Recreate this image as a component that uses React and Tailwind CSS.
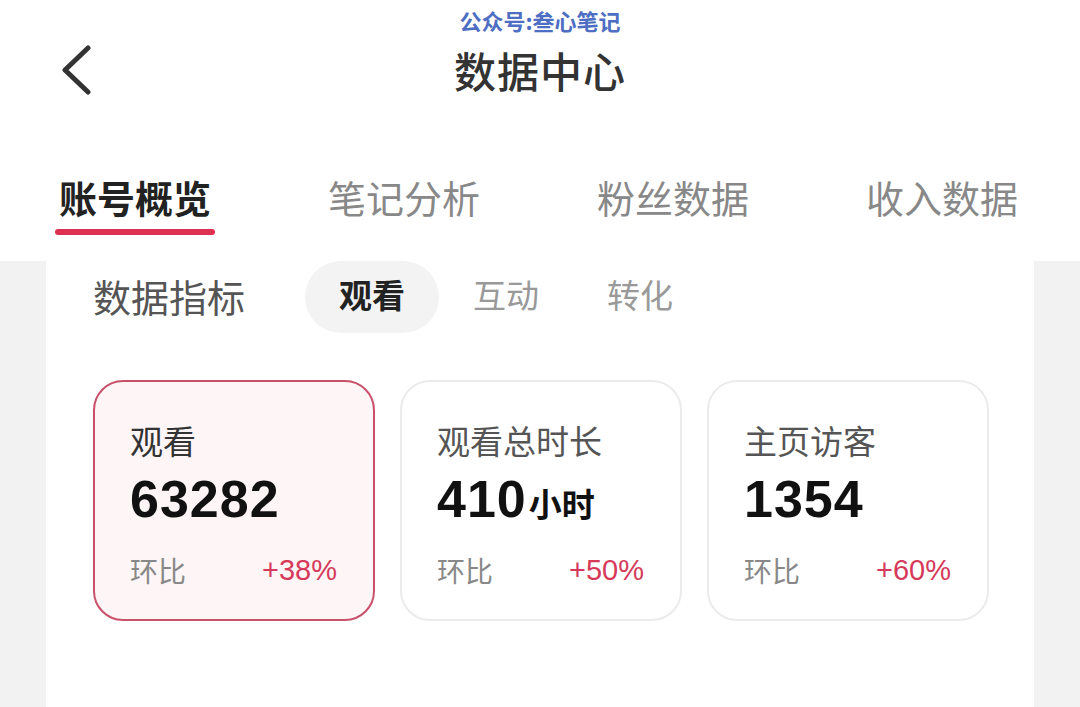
const TABS = ['账号概览', '笔记分析', '粉丝数据', '收入数据'];
const SEGMENTS = ['观看', '互动', '转化'];

const CARDS = [
  { label: '观看', value: '63282', unit: '', change: '+38%', active: true },
  { label: '观看总时长', value: '410', unit: '小时', change: '+50%' },
  { label: '主页访客', value: '1354', unit: '', change: '+60%' },
];

function BackIcon() {
  return (
    <svg width="34" height="50" viewBox="0 0 34 50" fill="none">
      <path d="M28 3 L5 25 L28 47" stroke="#333" strokeWidth="5" strokeLinecap="round" strokeLinejoin="round" />
    </svg>
  );
}

function StatCard({ label, value, unit, change, active }) {
  return (
    <div
      className={`w-[282px] h-[241px] rounded-[30px] border-2 pl-[35px] pr-[36px] pt-[36px] ${
        active ? 'border-[#c9506a] bg-[#fdf5f6]' : 'border-[#ebebeb] bg-white'
      }`}
    >
      <p className={`text-[33px] leading-[44px] ${active ? 'text-[#333]' : 'text-[#555]'}`}>{label}</p>
      <p className="mt-[9px] h-[56px] flex items-baseline leading-[56px] text-[#111]">
        <span className="font-['Liberation_Sans',sans-serif] text-[52px] font-bold tracking-[1px]">{value}</span>
        {unit && <span className="ml-[2px] text-[33px] font-bold leading-none">{unit}</span>}
      </p>
      <div className="mt-[23px] flex items-center justify-between leading-[40px]">
        <span className="text-[28px] text-[#888]">环比</span>
        <span className="font-['Liberation_Sans',sans-serif] text-[29px] text-[#d63a5a]">{change}</span>
      </div>
    </div>
  );
}

export default function App() {
  return (
    <div className="w-[1080px] h-[707px] overflow-hidden bg-white font-['Noto_Sans_CJK_SC',sans-serif] flex flex-col">
      {/* Watermark */}
      <div className="h-[40px] flex items-center justify-center">
        <span className="text-[22px] font-bold text-[#4d6ec2] leading-none">公众号:叁心笔记</span>
      </div>

      {/* Nav bar */}
      <div className="h-[60px] grid grid-cols-[1fr_auto_1fr] items-center">
        <div className="pl-[60px] flex items-center">
          <BackIcon />
        </div>
        <h1 className="text-[42px] font-medium text-[#333] leading-none tracking-[1px]">数据中心</h1>
        <div />
      </div>

      {/* Tabs */}
      <div className="mt-[72px] flex justify-between pl-[55px] pr-[58px]">
        {TABS.map((t, i) => (
          <div key={t} className="flex flex-col items-center">
            <span
              className={`text-[38px] leading-[50px] ${
                i === 0 ? 'font-bold text-[#222]' : 'text-[#888]'
              }`}
            >
              {t}
            </span>
            <span className={`mt-[7px] h-[6px] w-[160px] rounded-full ${i === 0 ? 'bg-[#de3050]' : 'bg-transparent'}`} />
          </div>
        ))}
      </div>

      {/* Body */}
      <div className="mt-[26px] flex flex-1">
        <div className="w-[46px] bg-[#f2f2f2]" />
        <div className="flex-1 bg-white">
          <div className="flex items-center h-[72px] pl-[47px]">
            <span className="text-[38px] text-[#555] leading-none -mt-[2px]">数据指标</span>
            <div className="ml-[60px] flex">
              {SEGMENTS.map((s, i) => (
                <div
                  key={s}
                  className={`w-[134px] h-[72px] rounded-full flex items-center justify-center text-[33px] pb-[4px] ${
                    i === 0 ? 'bg-[#f3f3f3] font-bold text-[#222]' : 'text-[#999]'
                  }`}
                >
                  {s}
                </div>
              ))}
            </div>
          </div>

          <div className="mt-[47px] pl-[47px] flex gap-[25px]">
            {CARDS.map((c) => (
              <StatCard key={c.label} {...c} />
            ))}
          </div>
        </div>
        <div className="w-[46px] bg-[#f2f2f2]" />
      </div>
    </div>
  );
}
